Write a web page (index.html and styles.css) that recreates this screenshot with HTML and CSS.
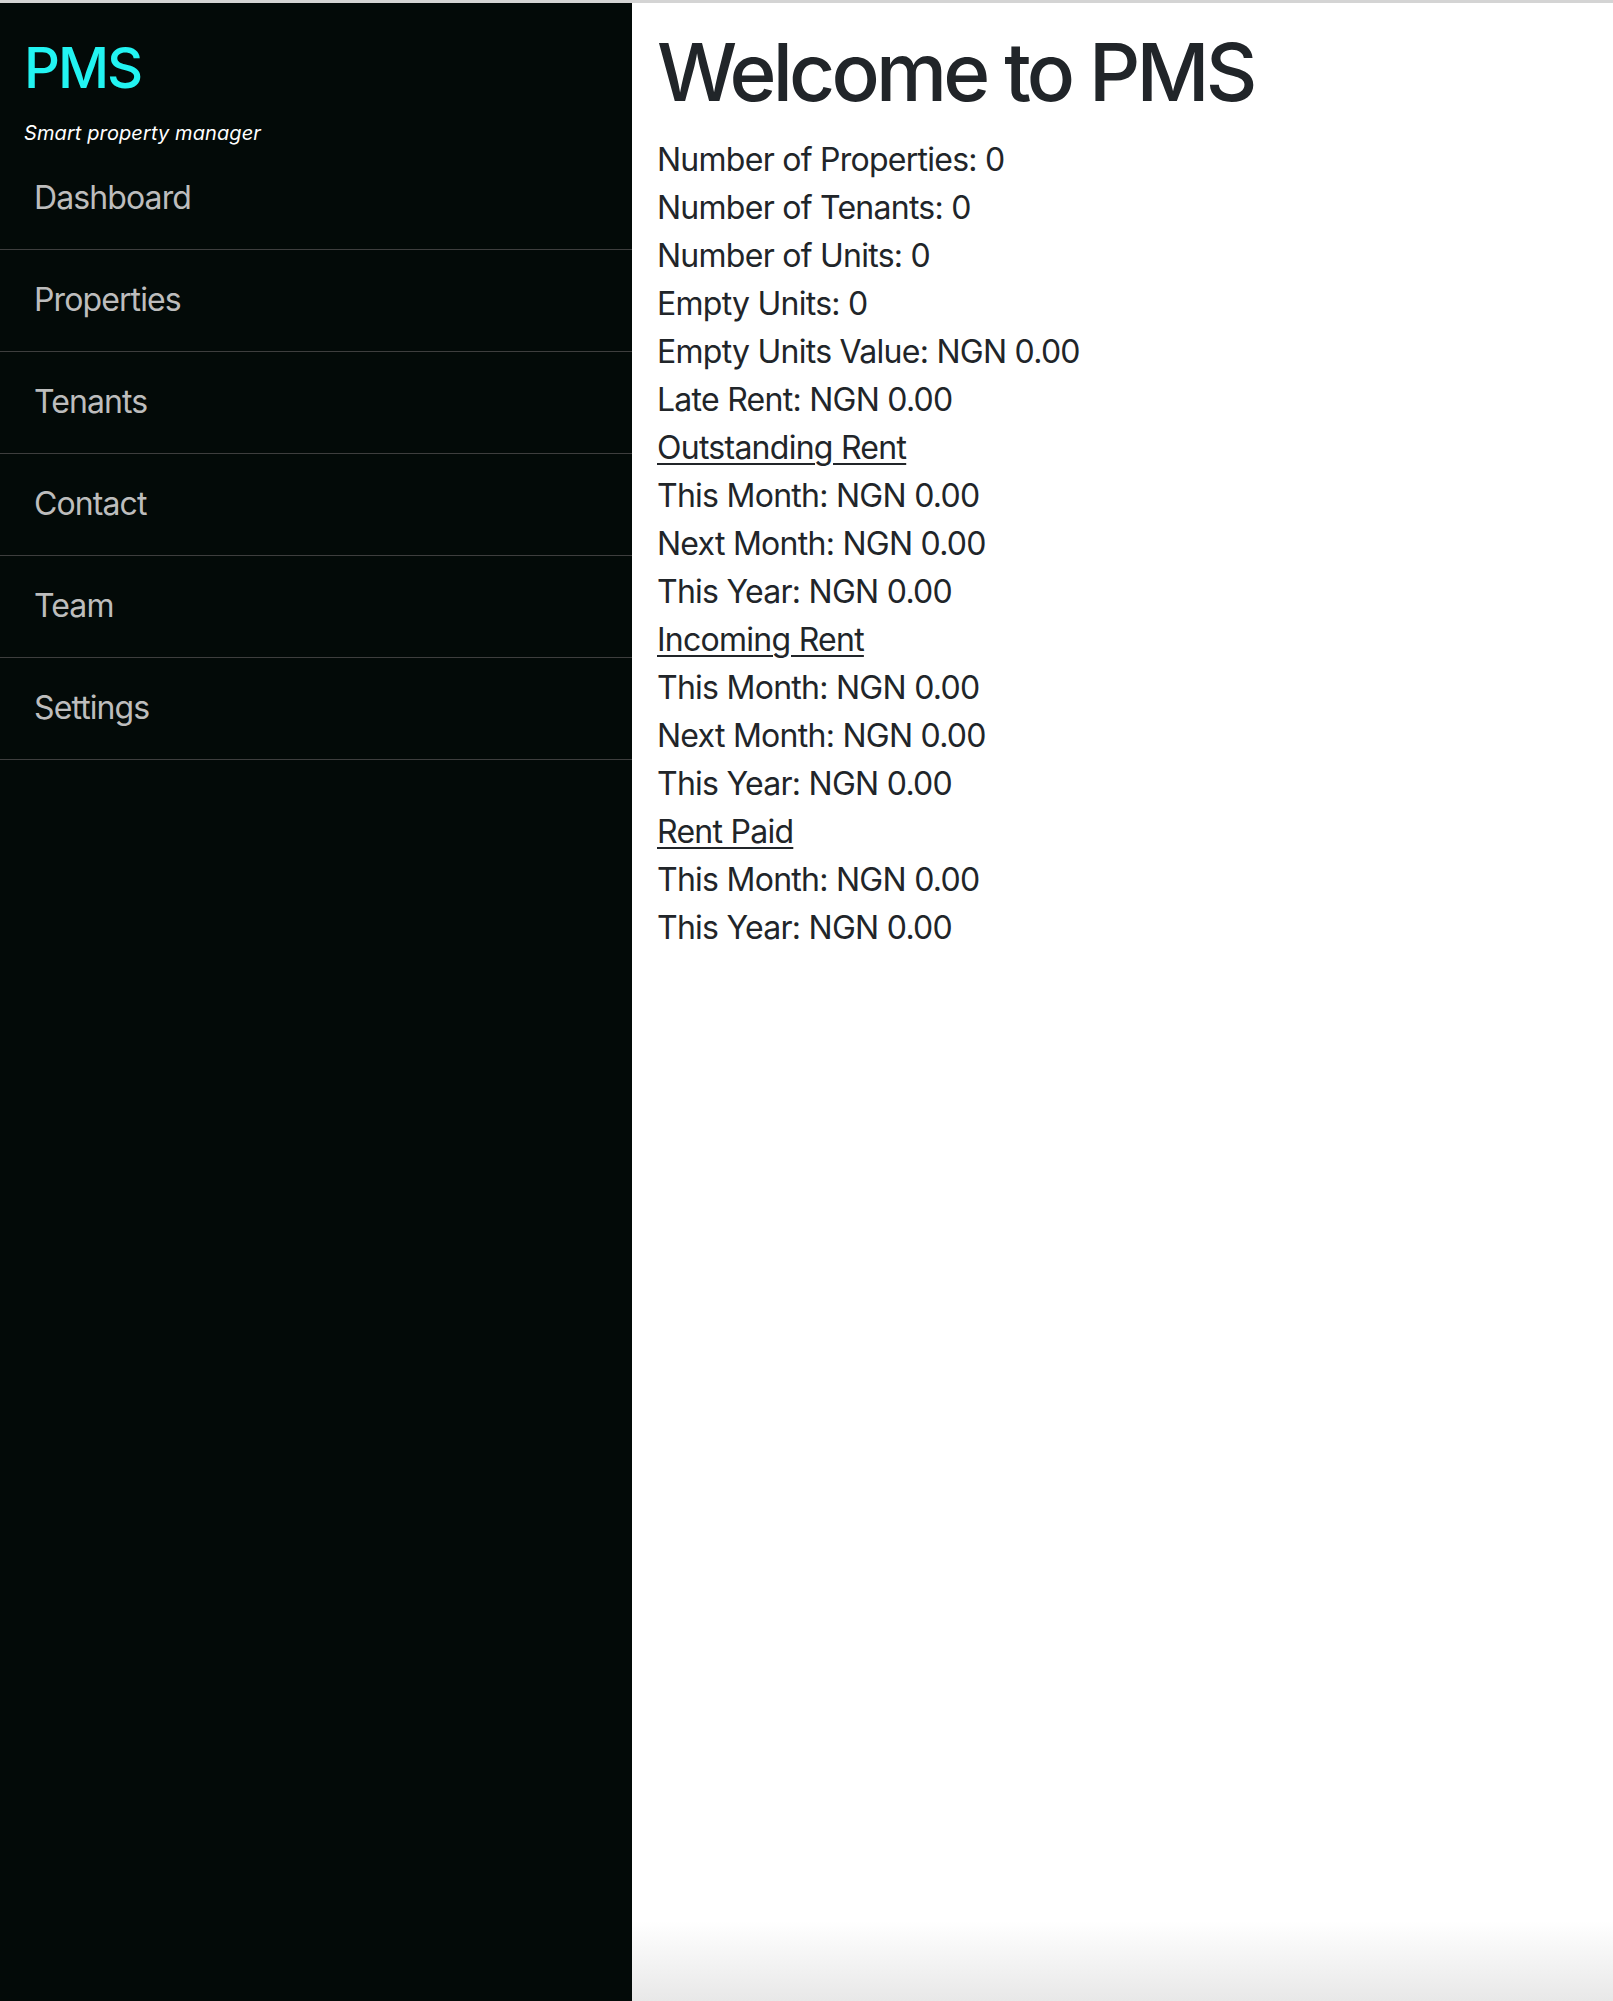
FILE: index.html
```html
<!DOCTYPE html>
<html lang="en">
<head>
<meta charset="utf-8">
<title>PMS</title>
<link rel="stylesheet" href="styles.css">
</head>
<body>
<div class="layout">
  <aside class="sidebar">
    <div class="brand">
      <h1 class="brand-name">PMS</h1>
      <p class="brand-tag">Smart property manager</p>
    </div>
    <nav class="nav">
      <a class="nav-item" href="#">Dashboard</a>
      <a class="nav-item" href="#">Properties</a>
      <a class="nav-item" href="#">Tenants</a>
      <a class="nav-item" href="#">Contact</a>
      <a class="nav-item" href="#">Team</a>
      <a class="nav-item" href="#">Settings</a>
    </nav>
  </aside>
  <main class="main">
    <h1 class="title">Welcome to PMS</h1>
    <p class="stat">Number of Properties: 0</p>
    <p class="stat">Number of Tenants: 0</p>
    <p class="stat">Number of Units: 0</p>
    <p class="stat">Empty Units: 0</p>
    <p class="stat">Empty Units Value: NGN 0.00</p>
    <p class="stat">Late Rent: NGN 0.00</p>
    <p class="stat section">Outstanding Rent</p>
    <p class="stat">This Month: NGN 0.00</p>
    <p class="stat">Next Month: NGN 0.00</p>
    <p class="stat">This Year: NGN 0.00</p>
    <p class="stat section">Incoming Rent</p>
    <p class="stat">This Month: NGN 0.00</p>
    <p class="stat">Next Month: NGN 0.00</p>
    <p class="stat">This Year: NGN 0.00</p>
    <p class="stat section">Rent Paid</p>
    <p class="stat">This Month: NGN 0.00</p>
    <p class="stat">This Year: NGN 0.00</p>
  </main>
</div>
</body>
</html>
```
FILE: styles.css
```css
* { box-sizing: border-box; }
html, body { margin: 0; padding: 0; }
body {
  font-family: Inter, "Noto Sans", "Liberation Sans", sans-serif;
  border-top: 3px solid #d4d4d4;
  background: #fff;
  color: #212529;
}
.layout {
  display: flex;
  min-height: calc(100vh - 3px);
}
.sidebar {
  width: 632px;
  flex: 0 0 632px;
  background: #030a08;
}
.brand {
  padding: 32px 24px 0;
}
.brand-name {
  margin: 0;
  font-size: 56px;
  line-height: 67px;
  font-weight: 500;
  letter-spacing: -0.035em;
  color: #22f4f2;
}
.brand-tag {
  margin: 16px 0 0;
  font-size: 20px;
  line-height: 30px;
  font-style: italic;
  color: #fff;
  letter-spacing: 0.005em;
}
.nav {
  display: flex;
  flex-direction: column;
}
.nav-item {
  display: block;
  padding: 26px 34px 27px;
  font-size: 32px;
  line-height: 48px;
  color: #bdbdbd;
  text-decoration: none;
  border-bottom: 1px solid #3e3e3e;
  letter-spacing: -0.028em;
}
.main {
  flex: 1;
  padding: 21px 25px 0;
  background: linear-gradient(to bottom, #fff calc(100% - 80px), #e8e8e8);
}
.title {
  margin: 0 0 16px;
  font-size: 80px;
  line-height: 96px;
  font-weight: 500;
  letter-spacing: -0.047em;
}
.stat {
  margin: 0;
  font-size: 32px;
  line-height: 48px;
  letter-spacing: -0.023em;
}
.section {
  text-decoration: underline;
  text-decoration-thickness: 2px;
  text-underline-offset: 4px;
}
```
